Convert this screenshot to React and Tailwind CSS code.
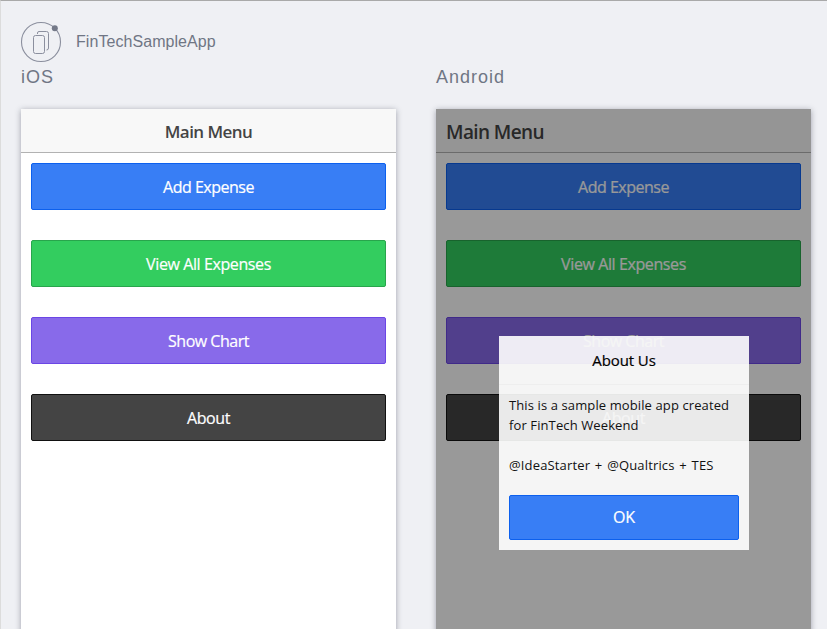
const uiFont = "font-['Open_Sans','Noto_Sans',sans-serif]";

const menu = [
  { label: 'Add Expense', tone: 'bg-[#387ef5] border-[#0c60ee]', text: 'tracking-[-0.5px]' },
  { label: 'View All Expenses', tone: 'bg-[#33cd5f] border-[#28a54c]', text: 'tracking-[-0.4px]' },
  { label: 'Show Chart', tone: 'bg-[#886aea] border-[#6b46e5]', text: 'tracking-[-0.5px]' },
  { label: 'About', tone: 'bg-[#444444] border-[#111111]', text: 'tracking-[-0.4px]' },
];

function AppLogo() {
  return (
    <svg width="42" height="42" viewBox="0 0 42 42" fill="none" stroke="#8b8f9e" className="shrink-0">
      <circle cx="21" cy="21" r="19.5" strokeWidth="1.1" />
      <rect x="13.5" y="14.5" width="11" height="18" rx="2" />
      <path d="M17.5 13v-1a1.5 1.5 0 0 1 1.5-1.5h7.500a2 2 0 0 1 2 2v14.500a2 2 0 0 1-2 2" />
      <circle cx="34.8" cy="7.2" r="3" fill="#747988" stroke="none" />
    </svg>
  );
}

function Screen({ titleClass, children }) {
  return (
    <div className={`relative h-[620px] w-[375px] bg-white shadow-[0_1px_6px_rgba(40,45,65,0.4)] ${uiFont}`}>
      <div className={`h-11 border-b border-[#b2b2b2] bg-[#f8f8f8] font-semibold text-[#444] ${titleClass}`}>
        Main Menu
      </div>
      <div className="flex flex-col gap-[30px] p-[10px]">
        {menu.map((m) => (
          <button key={m.label} className={`h-[47px] rounded-[2px] border text-[16px] leading-[47px] text-white [-webkit-text-stroke:0.2px_white] ${m.tone} ${m.text}`}>
            {m.label}
          </button>
        ))}
      </div>
      {children}
    </div>
  );
}

function AboutPopup() {
  return (
    <div className="absolute inset-0 bg-black/40">
      <div className="absolute left-[63px] top-[227px] w-[250px] bg-white/90 text-black">
        <h3 className="h-[49px] border-b border-[#eeeeee] text-center text-[15px] leading-[48px] tracking-[-0.1px] [-webkit-text-stroke:0.2px_black]">About Us</h3>
        <div className="whitespace-nowrap p-[10px] text-[13px] leading-[20px] text-[#111]">
          <p className="tracking-[0.11px]">This is a sample mobile app created<br />for FinTech Weekend</p>
          <p className="mt-5 tracking-[0.15px] [word-spacing:1.2px]">@IdeaStarter + @Qualtrics + TES</p>
        </div>
        <div className="p-[10px]">
          <button className="block h-[45px] w-full rounded-[2px] border border-[#0c60ee] bg-[#387ef5] text-[16px] leading-[43px] tracking-[-0.2px] text-white [-webkit-text-stroke:0.2px_white]">OK</button>
        </div>
      </div>
    </div>
  );
}

export default function App() {
  return (
    <div className="h-[629px] w-[827px] overflow-hidden border-l border-t border-l-[#dcdcdc] border-t-[#a9a9a9] bg-[#eff0f4] pl-5 pt-5 font-['Liberation_Sans',Arial,sans-serif] text-[#6f7684]">
      <header className="-ml-px flex h-[42px] items-center gap-[14px]">
        <AppLogo />
        <span className="text-[16px] tracking-[0.06px]">FinTechSampleApp</span>
      </header>
      <main className="flex gap-10">
        <section>
          <h2 className="h-[46px] text-[18px] leading-[28px] tracking-[1px]">iOS</h2>
          <Screen titleClass="text-center text-[17px] leading-[45px] tracking-[-0.55px]" />
        </section>
        <section>
          <h2 className="h-[46px] text-[18px] leading-[28px] tracking-[1px]">Android</h2>
          <Screen titleClass="pl-[10px] text-[19px] leading-[46px] tracking-[-0.6px]">
            <AboutPopup />
          </Screen>
        </section>
      </main>
    </div>
  );
}
